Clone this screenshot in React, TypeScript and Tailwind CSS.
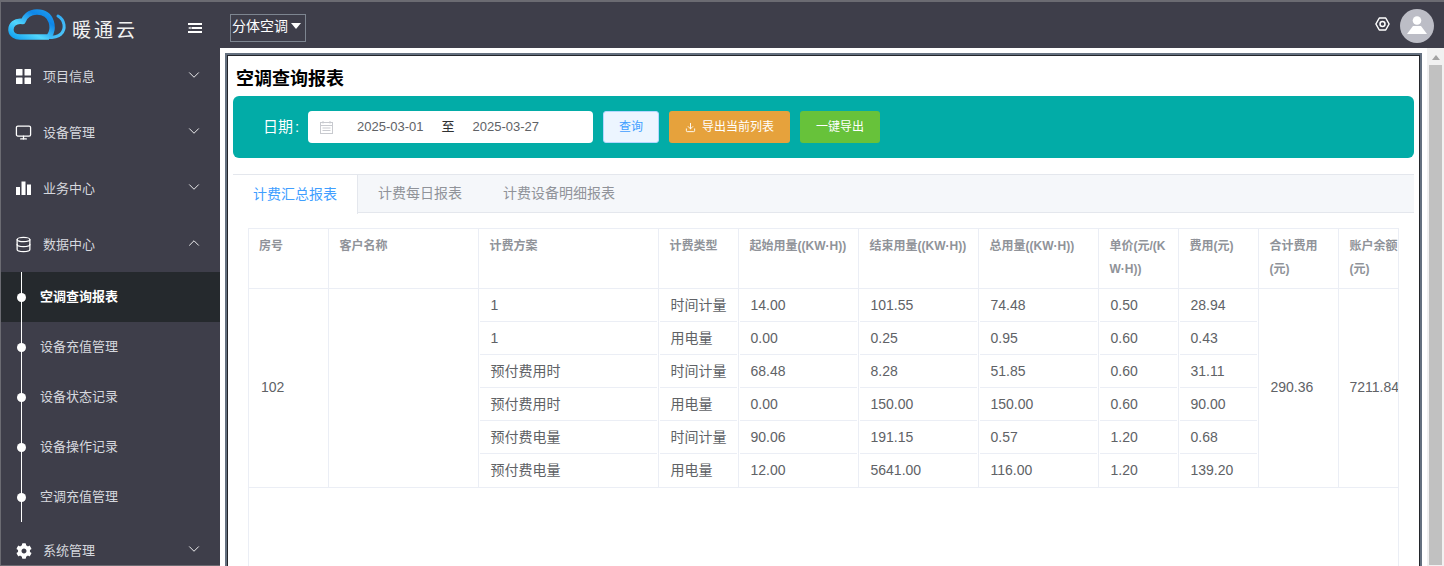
import React from "react";
import { ChevronDown, ChevronUp, Monitor, Database, Download } from "lucide-react";
import { FaCog } from "react-icons/fa";

function Grid4() {
  return (
    <svg width="15" height="15" viewBox="0 0 15 15" fill="#fff">
      <rect x="0" y="0" width="6.5" height="6.5" rx="0.5" />
      <rect x="8.5" y="0" width="6.5" height="6.5" rx="0.5" />
      <rect x="0" y="8.5" width="6.5" height="6.5" rx="0.5" />
      <rect x="8.5" y="8.5" width="6.5" height="6.5" rx="0.5" />
    </svg>
  );
}
function Bars() {
  return (
    <svg width="15" height="15" viewBox="0 0 15 15" fill="#fff">
      <rect x="0" y="6" width="4" height="8" />
      <rect x="5.5" y="0.5" width="4" height="13.5" />
      <rect x="11" y="3.5" width="4" height="10.5" />
    </svg>
  );
}
function Logo() {
  return (
    <svg width="59" height="32" viewBox="0 0 59 32" fill="none" className="shrink-0">
      <defs>
        <linearGradient id="lg" x1="0" y1="1" x2="1" y2="0">
          <stop offset="0" stopColor="#12a0f0" />
          <stop offset="0.35" stopColor="#52d6fc" />
          <stop offset="0.75" stopColor="#0e86e8" />
          <stop offset="1" stopColor="#1f9cf0" />
        </linearGradient>
        <linearGradient id="lg2" x1="0" y1="0" x2="1" y2="1">
          <stop offset="0" stopColor="#1e9bf0" />
          <stop offset="1" stopColor="#50c8fa" />
        </linearGradient>
      </defs>
      <path d="M50 7C57 11 58 20 53 25C49 28.5 44 29 36 28.5" stroke="url(#lg2)" strokeWidth="3" strokeLinecap="round" />
      <path d="M41 27.5C47 21 45 3 29 3C21 3 16.5 8 15 12.5C7 11 2.5 16 3 21.5C3.5 26 8 28 12 28H41" stroke="url(#lg)" strokeWidth="5.4" strokeLinejoin="round" />
    </svg>
  );
}
function Collapse() {
  return (
    <svg width="14" height="10" viewBox="0 0 14 10" fill="#fff" className="shrink-0">
      <rect x="0" y="0" width="14" height="2" />
      <rect x="3.5" y="4" width="10.5" height="2" />
      <path d="M0 5 2.6 3.7v2.6z" />
      <rect x="0" y="8" width="14" height="2" />
    </svg>
  );
}
function HexGear() {
  return (
    <svg width="15" height="14" viewBox="0 0 15 14" fill="none" stroke="#fff" strokeWidth="1.5" strokeLinejoin="round" className="mr-[10px] mb-[5px]">
      <path d="M4.3 1h6.4l3.4 6-3.4 6H4.3L.9 7z" />
      <circle cx="7.5" cy="7" r="2.5" />
    </svg>
  );
}
function Cal() {
  return (
    <svg width="13" height="13" viewBox="0 0 13 13" fill="none" stroke="#c8cacf" strokeWidth="1" className="ml-[12px] shrink-0">
      <rect x="0.5" y="1.5" width="12" height="11" />
      <path d="M0.5 4.5h12M3 0v2.5M10 0v2.5M2.5 7h8M2.5 9.5h8" />
    </svg>
  );
}

const Menu = ({ icon, label, open }: { icon: React.ReactNode; label: string; open?: boolean }) => (
  <div className="h-14 shrink-0 flex items-center pl-[14px] pr-[17px] pt-[1px] text-[13px] text-[#d6d8de]">
    <span className="w-[17px] h-[17px] flex items-center justify-center">{icon}</span>
    <span className="ml-[11px] flex-1">{label}</span>
    {open ? <ChevronUp size={18} className="text-white mb-[4px]" strokeWidth={1.2} /> : <ChevronDown size={18} className="text-white mb-[4px]" strokeWidth={1.2} />}
  </div>
);

const subs = ["空调查询报表", "设备充值管理", "设备状态记录", "设备操作记录", "空调充值管理"];

const rows = [
  ["1", "时间计量", "14.00", "101.55", "74.48", "0.50", "28.94"],
  ["1", "用电量", "0.00", "0.25", "0.95", "0.60", "0.43"],
  ["预付费用时", "时间计量", "68.48", "8.28", "51.85", "0.60", "31.11"],
  ["预付费用时", "用电量", "0.00", "150.00", "150.00", "0.60", "90.00"],
  ["预付费电量", "时间计量", "90.06", "191.15", "0.57", "1.20", "0.68"],
  ["预付费电量", "用电量", "12.00", "5641.00", "116.00", "1.20", "139.20"],
];

const heads: [string, number][] = [
  ["房号", 79],
  ["客户名称", 150],
  ["计费方案", 180],
  ["计费类型", 80],
  ["起始用量((KW·H))", 120],
  ["结束用量((KW·H))", 120],
  ["总用量((KW·H))", 120],
  ["单价(元/(KW·H))", 80],
  ["费用(元)", 80],
  ["合计费用(元)", 80],
  ["账户余额(元)", 80],
];

export default function App() {
  return (
    <div className="w-[1444px] h-[566px] overflow-hidden flex bg-[#3e3e4a] border-t-2 border-l border-[#6b6b72] box-border" style={{ fontFamily: '"Liberation Sans","Noto Sans CJK SC",sans-serif' }}>
      <aside className="w-[219px] h-full overflow-hidden shrink-0 flex flex-col border-b border-[#6b6b72]">
        <div className="h-[46px] shrink-0 flex items-center pl-[7px] pr-[18px]">
          <Logo />
          <span className="ml-[5px] mt-[12px] text-[19px] leading-[24px] tracking-[3px] text-[#f2f2f2]">暖通云</span>
          <span className="ml-auto mt-[6px]"><Collapse /></span>
        </div>
        <Menu icon={<Grid4 />} label="项目信息" />
        <Menu icon={<Monitor size={17} color="#fff" strokeWidth={1.8} />} label="设备管理" />
        <Menu icon={<Bars />} label="业务中心" />
        <Menu icon={<Database size={17} color="#fff" strokeWidth={1.8} />} label="数据中心" open />
        <div className="flex flex-col relative shrink-0">
          <div className="absolute left-[20px] top-0 bottom-0 w-px bg-white" />
          {subs.map((s, i) => (
            <div key={s} className={`h-[50px] flex items-center pl-[39px] text-[13px] ${i === 0 ? "bg-[#25292d] text-white font-bold" : "text-[#d6d8de] pb-[1px]"}`}>
              <span className={`absolute left-[16px] w-[9px] h-[9px] rounded-full bg-white ${i === 0 ? "" : "mt-[1px]"}`} />
              {s}
            </div>
          ))}
        </div>
        <Menu icon={<FaCog size={16} color="#fff" />} label="系统管理" />
      </aside>
      <div className="flex-1 flex flex-col min-w-0">
        <header className="h-[46px] shrink-0 flex items-center">
          <div className="ml-[10px] mt-[6px] h-[28px] w-[76px] border border-[#7d8590] flex items-center pl-[1px] pb-[4px] text-[14px] text-white">
            分体空调
            <svg width="10" height="6" viewBox="0 0 10 6" className="ml-[3px]" fill="#fff"><path d="M0 0h10L5 6z" /></svg>
          </div>
          <div className="ml-auto flex items-center pr-[10px] mt-[2px]">
            <HexGear />
            <div className="w-[34px] h-[34px] rounded-full bg-[#bcbdc6] flex items-center justify-center">
              <svg width="20" height="20" viewBox="0 0 20 20" fill="#fff">
                <circle cx="10" cy="4.5" r="4.3" />
                <path d="M6 10h8l6 8H0z" />
              </svg>
            </div>
          </div>
        </header>
        <div className="flex-1 flex bg-white min-h-0">
          <div className="flex-1 min-w-0 pl-[5px] pr-[5px] pt-[5px]">
            <main className="h-[600px] border-t-[2px] border-x-[3px] border-[#64707f]">
              <div className="h-full border-t border-x border-[#23262b] pl-[5px] pr-[5px] -mx-[1px]">
                <h1 className="text-[18px] leading-[24px] mt-[11px] ml-[3px] font-bold text-black">空调查询报表</h1>
                <div className="mt-[5px] h-[62px] bg-[#02aca7] rounded-[6px] flex items-center pl-[30px]">
                  <span className="text-[15px] text-white w-[45px]">日期<span className="ml-[2px]">:</span></span>
                  <div className="h-[32px] w-[285px] bg-white rounded-[4px] flex items-center text-[13px] text-[#606266]">
                    <Cal />
                    <span className="ml-[24px]">2025-03-01</span>
                    <span className="ml-[18px] text-[#303133]">至</span>
                    <span className="ml-[18px]">2025-03-27</span>
                  </div>
                  <div className="ml-[10px] h-[32px] w-[56px] bg-[#ecf5ff] border border-[#b3d8ff] rounded-[3px] flex items-center justify-center text-[12px] text-[#409eff]">查询</div>
                  <div className="ml-[10px] h-[32px] w-[121px] bg-[#e6a23c] rounded-[3px] flex items-center justify-center text-[12px] text-white">
                    <Download size={11} className="mr-[6px]" />导出当前列表
                  </div>
                  <div className="ml-[10px] h-[32px] w-[80px] bg-[#67c23a] rounded-[3px] flex items-center justify-center text-[12px] text-white">一键导出</div>
                </div>
                <div className="mt-[16px] h-[39px] bg-[#f5f7fa] border-y border-[#e4e7ed] flex text-[14px] text-[#909399]">
                  <div className="w-[125px] bg-white text-[#409eff] border-r border-[#e4e7ed] h-[39px] flex items-center justify-center">计费汇总报表</div>
                  <div className="pl-[20px] pr-[21px] flex items-center">计费每日报表</div>
                  <div className="pl-[20px] flex items-center">计费设备明细报表</div>
                </div>
                <div className="mt-[15px] ml-[15px] w-[1151px] h-[400px] overflow-hidden border-x border-t border-[#ebeef5]">
                  <table className="table-fixed border-collapse w-[1169px]">
                    <colgroup>
                      {heads.map(([h, w]) => <col key={h} style={{ width: w }} />)}
                    </colgroup>
                    <thead>
                      <tr className="h-[59px] border-b border-[#ebeef5]">
                        {heads.map(([h]) => (
                          <th key={h} className="align-top text-left text-[12px] leading-[23px] font-bold text-[#909399] pl-[11px] first:pl-[10px] pr-[9px] pt-[6px] border-r border-[#ebeef5] last:border-r-0 break-all">{h}</th>
                        ))}
                      </tr>
                    </thead>
                    <tbody className="text-[14px] text-[#606266]">
                      {rows.map((r, i) => (
                        <tr key={i} className="h-[33px]">
                          {i === 0 && <td rowSpan={6} className="pl-[12px] border-r border-b border-[#ebeef5]">102</td>}
                          {i === 0 && <td rowSpan={6} className="border-r border-b border-[#ebeef5]" />}
                          {r.map((c, j) => (
                            <td key={j} className={`p-0 border-r border-[#ebeef5] ${i === 5 ? "border-b" : ""}`}>
                              <div className={`h-[33px] mx-[1px] pl-[11px] pt-[1px] flex items-center ${i < 5 ? "border-b border-[#ebeef5]" : ""}`}>{c}</div>
                            </td>
                          ))}
                          {i === 0 && <td rowSpan={6} className="pl-[12px] border-r border-b border-[#ebeef5]">290.36</td>}
                          {i === 0 && <td rowSpan={6} className="pl-[11px] border-b border-[#ebeef5] whitespace-nowrap">7211.84</td>}
                        </tr>
                      ))}
                    </tbody>
                  </table>
                </div>
              </div>
            </main>
          </div>
          <div className="w-[17px] shrink-0 bg-[#f1f1f1] flex flex-col items-center">
            <svg width="8" height="5" viewBox="0 0 8 5" className="mt-[7px]" fill="#a3a3a3"><path d="M4 0l4 5H0z" /></svg>
            <div className="mt-[5px] w-[13px] h-[500px] bg-[#c1c1c1]" />
          </div>
        </div>
      </div>
    </div>
  );
}
